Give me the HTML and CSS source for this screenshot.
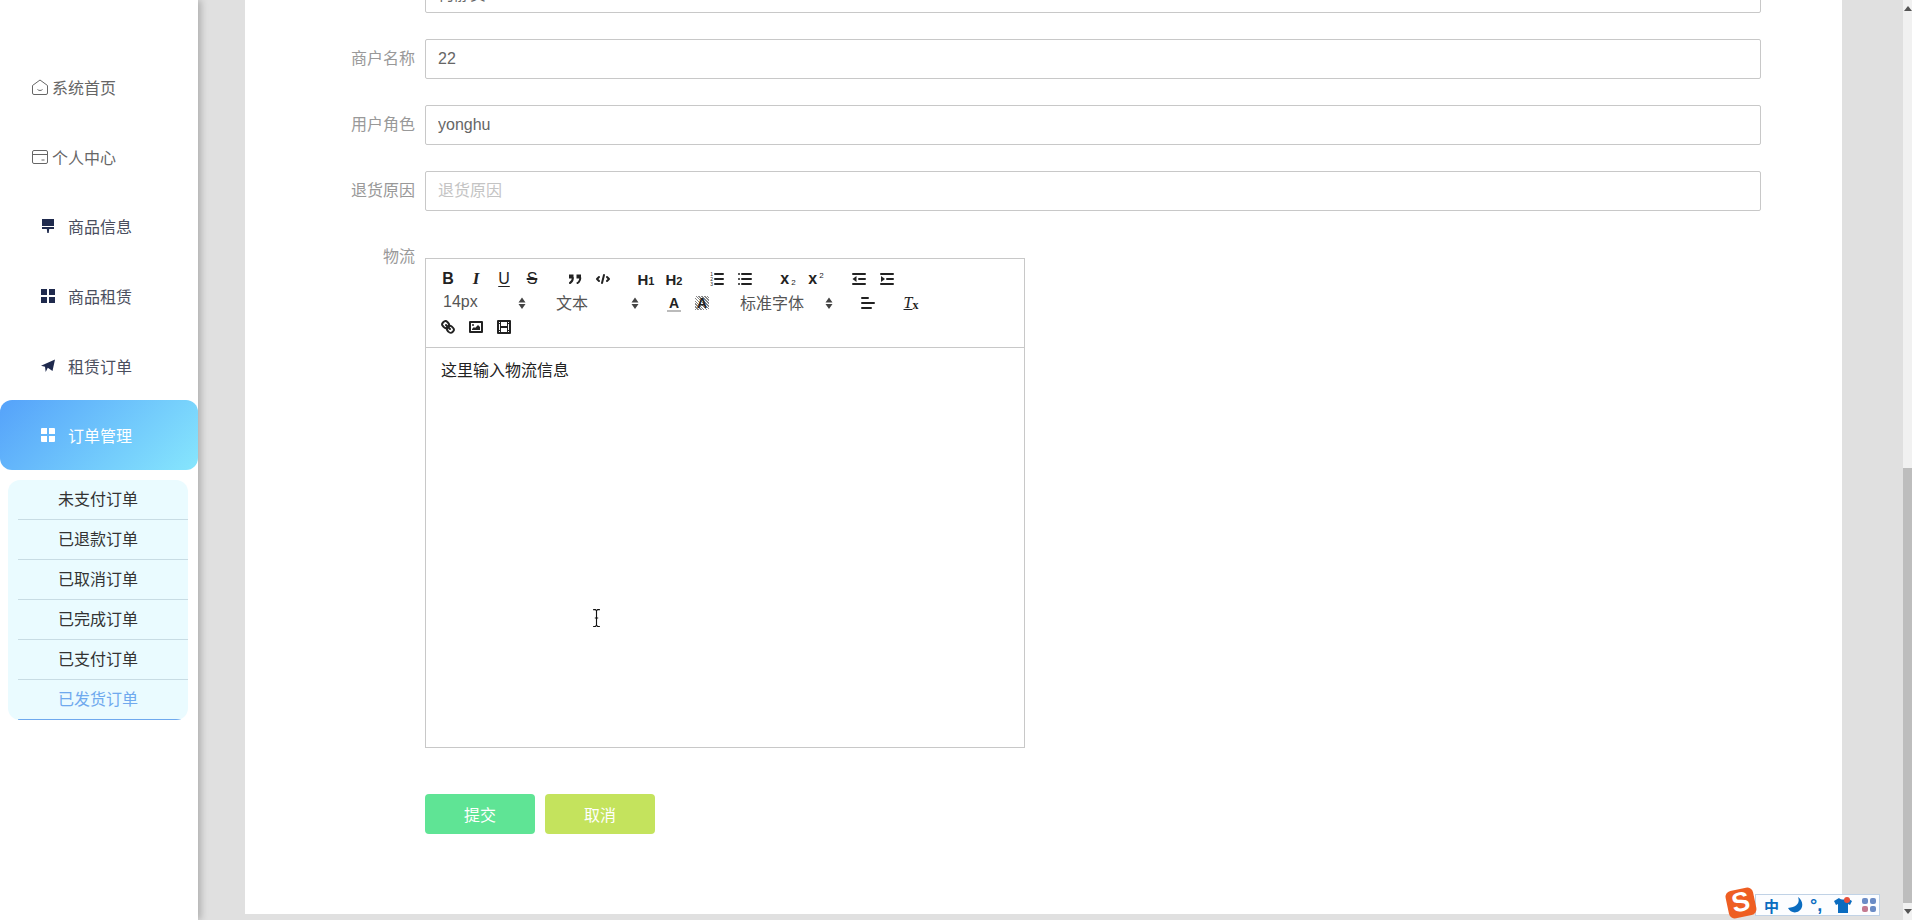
FILE: index.html
```html
<!DOCTYPE html>
<html lang="zh-CN">
<head>
    <meta charset="UTF-8">
    <title>订单管理</title>
    <link rel="stylesheet" href="styles.css">
</head>
<body>
    <aside class="sidebar">
        <a class="nav-item nav-plain">
            <svg class="nav-line-icon" viewBox="0 0 16 16"><path d="M8 1 15.500 6.500V14a1.500 1.500 0 0 1-1.500 1.500H2A1.500 1.500 0 0 1 .5 14V6.500Z"/><path d="M5.500 10.500c1.300 1.300 3.700 1.300 5 0"/></svg>
            <span>系统首页</span>
        </a>
        <a class="nav-item nav-plain">
            <svg class="nav-line-icon" viewBox="0 0 16 16"><rect x=".5" y="1.500" width="15" height="13" rx="1.500"/><path d="M.5 5.500h15M9.500 11h3"/></svg>
            <span>个人中心</span>
        </a>
        <a class="nav-item">
            <svg class="nav-icon" viewBox="0 0 14 14"><path d="M1 0h12v7H1zM1 8h12v2H8.200L7.700 14H6.300L5.800 10H1z"/></svg>
            <span>商品信息</span>
        </a>
        <a class="nav-item">
            <svg class="nav-icon" viewBox="0 0 14 14"><path d="M0 0h6v6H0zM8 0h6v6H8zM0 8h6v6H0zM8 8h6v6H8z"/></svg>
            <span>商品租赁</span>
        </a>
        <a class="nav-item">
            <svg class="nav-icon" viewBox="0 0 14 14"><path d="M14 .5 11.500 12 6.800 8.800 4.700 13 4 7.800 0 6.800Z"/></svg>
            <span>租赁订单</span>
        </a>
        <a class="nav-item nav-active">
            <svg class="nav-icon" viewBox="0 0 14 14"><path d="M0 1a1 1 0 0 1 1-1h5v6H0zM8 0h5a1 1 0 0 1 1 1v5H8zM0 8h6v6H1a1 1 0 0 1-1-1zM8 8h6v5a1 1 0 0 1-1 1H8z"/></svg>
            <span>订单管理</span>
        </a>
        <ul class="submenu">
            <li>未支付订单</li>
            <li>已退款订单</li>
            <li>已取消订单</li>
            <li>已完成订单</li>
            <li>已支付订单</li>
            <li class="sub-current">已发货订单</li>
        </ul>
    </aside>

    <main class="main">
        <form class="card">
            <div class="row">
                <label class="row-label">姓名</label>
                <input class="field" type="text" value="何静贞">
            </div>
            <div class="row">
                <label class="row-label">商户名称</label>
                <input class="field" type="text" value="22">
            </div>
            <div class="row">
                <label class="row-label">用户角色</label>
                <input class="field" type="text" value="yonghu">
            </div>
            <div class="row">
                <label class="row-label">退货原因</label>
                <input class="field" type="text" placeholder="退货原因">
            </div>
            <div class="row">
                <label class="row-label">物流</label>
                <div class="editor">
                    <div class="toolbar">
                        <div class="tool-group">
                            <span class="tool tool-bold">B</span>
                            <span class="tool tool-italic">I</span>
                            <span class="tool tool-under">U</span>
                            <span class="tool tool-strike">S</span>
                        </div>
                        <div class="tool-group">
                            <span class="tool"><svg viewBox="0 0 18 18"><path class="solid" d="M3 4.500h4.500v4H3zM10.500 4.500H15v4h-4.500z"/><path class="line" d="M6.800 8c0 3.500-2.800 5-2.800 5M14.300 8c0 3.500-2.800 5-2.800 5"/></svg></span>
                            <span class="tool"><svg viewBox="0 0 18 18"><path class="line" d="M5 7 3 9l2 2M13 7l2 2-2 2M10 5 8 13"/></svg></span>
                        </div>
                        <div class="tool-group">
                            <span class="tool tool-head">H<small>1</small></span>
                            <span class="tool tool-head">H<small>2</small></span>
                        </div>
                        <div class="tool-group">
                            <span class="tool"><svg viewBox="0 0 18 18"><path class="line" d="M7 4h8M7 9h8M7 14h8"/><text class="mini-num" x="2.200" y="5.500">1</text><text class="mini-num" x="2.200" y="10.500">2</text><text class="mini-num" x="2.200" y="15.500">3</text></svg></span>
                            <span class="tool"><svg viewBox="0 0 18 18"><path class="line" d="M6 4h9M6 9h9M6 14h9M3 4h.01M3 9h.01M3 14h.01"/></svg></span>
                        </div>
                        <div class="tool-group">
                            <span class="tool tool-script">x<sub>2</sub></span>
                            <span class="tool tool-script">x<sup>2</sup></span>
                        </div>
                        <div class="tool-group">
                            <span class="tool"><svg viewBox="0 0 18 18"><path class="line" d="M3 14h12M3 4h12M9 9h6"/><path class="solid" d="M6.500 6v6L2.500 9z"/></svg></span>
                            <span class="tool"><svg viewBox="0 0 18 18"><path class="line" d="M3 14h12M3 4h12M9 9h6"/><path class="solid" d="M3 6v6l4-3z"/></svg></span>
                        </div>
                        <div class="tool-group picker picker-short">
                            <span>14px</span>
                            <svg viewBox="0 0 18 18"><path class="arrow" d="M5.500 8.500 9 3.500l3.500 5zM5.500 10 9 15l3.500-5z"/></svg>
                        </div>
                        <div class="tool-group picker picker-short">
                            <span>文本</span>
                            <svg viewBox="0 0 18 18"><path class="arrow" d="M5.500 8.500 9 3.500l3.500 5zM5.500 10 9 15l3.500-5z"/></svg>
                        </div>
                        <div class="tool-group">
                            <span class="tool tool-color">A</span>
                            <span class="tool tool-back"><b>A</b></span>
                        </div>
                        <div class="tool-group picker picker-long">
                            <span>标准字体</span>
                            <svg viewBox="0 0 18 18"><path class="arrow" d="M5.500 8.500 9 3.500l3.500 5zM5.500 10 9 15l3.500-5z"/></svg>
                        </div>
                        <div class="tool-group">
                            <span class="tool"><svg viewBox="0 0 18 18"><path class="line" d="M3 4h6M3 9h12M3 14h9"/></svg></span>
                        </div>
                        <div class="tool-group">
                            <span class="tool tool-clean"><i>T</i><b>x</b></span>
                        </div>
                        <div class="tool-group">
                            <span class="tool"><svg viewBox="0 0 18 18"><path class="line" d="M7 7l4 4"/><path class="line" d="M8.900 4.600a3.500 3.500 0 0 1 .4 4.700 3.500 3.500 0 0 1-4.700-.4C3.200 7.500 2 6.400 4.200 4.200S7.500 3.200 8.900 4.600Z"/><path class="line" d="M13.400 9.100a3.500 3.500 0 0 0-4.700-.4 3.500 3.500 0 0 0 .4 4.700c1.400 1.400 2.500 2.500 4.700.4s1-3.300-.4-4.700Z"/></svg></span>
                            <span class="tool"><svg viewBox="0 0 18 18"><rect class="line" x="3" y="4" width="12" height="10"/><circle class="solid" cx="6" cy="7" r="1"/><path class="solid" d="M5 12v-1l2-2 1 1 3-3 2 2v3z"/></svg></span>
                            <span class="tool"><svg viewBox="0 0 18 18"><rect class="line" x="3" y="3" width="12" height="12"/><path class="solid" d="M5 3h1v12H5zM12 3h1v12h-1zM5 8h8v2H5zM3 5h3v1H3zM3 12h3v1H3zM12 5h3v1h-3zM12 12h3v1h-3z"/></svg></span>
                        </div>
                    </div>
                    <div class="editor-body">这里输入物流信息</div>
                </div>
            </div>
            <div class="actions">
                <button class="btn btn-submit" type="button">提交</button>
                <button class="btn btn-cancel" type="button">取消</button>
            </div>
        </form>
    </main>

    <div class="scrollbar">
        <span class="scroll-up"></span>
        <div class="scroll-track"></div>
        <div class="scroll-thumb"></div>
        <span class="scroll-down"></span>
    </div>

    <!-- mouse cursor over the editor -->
    <svg class="cursor" viewBox="0 0 8 16"><path d="M1 .5h2l1 1 1-1h2M4 1.500v13M1 15.500h2l1-1 1 1h2M2.500 8h3"/></svg>

    <!-- input method bar -->
    <div class="ime">
        <span class="ime-logo"><b>S</b></span>
        <div class="ime-bar">
            <span class="ime-zh">中</span>
            <svg class="ime-moon" viewBox="0 0 16 16"><path d="M10 0c2 5 0 10-10 11 2 4 7 6 11 3 5-3 4-11-1-14z"/></svg>
            <span class="ime-punc">°,</span>
            <svg class="ime-shirt" viewBox="0 0 18 16"><path d="M5 1 0 4l2 4 2-1v9h10V7l2 1 2-4-5-3c-1 2-6 2-8 0z"/><circle class="ime-dot" cx="13" cy="3" r="3"/></svg>
            <span class="ime-grid"><i></i><i></i><i></i><i></i></span>
        </div>
    </div>
</body>
</html>
```

FILE: styles.css
```css
* {
    box-sizing: border-box;
}
body {
    margin: 0;
    height: 920px;
    display: flex;
    overflow: hidden;
    position: relative;
    background-color: #e0e0e0;
    font-family: "Liberation Sans", "Noto Sans CJK SC", sans-serif;
    font-size: 16px;
}

/* sidebar */
.sidebar {
    width: 198px;
    flex-shrink: 0;
    padding-top: 50px;
    background-color: white;
    box-shadow: 3px 0 7px rgba(0, 0, 0, 0.22);
    position: relative;
}
.nav-item {
    display: flex;
    align-items: center;
    height: 70px;
    padding-left: 41px;
    padding-top: 2px;
    gap: 13px;
    color: #4a4e5e;
}
.nav-plain {
    padding-left: 32px;
    padding-top: 4px;
    gap: 4px;
    color: #666;
}
.nav-line-icon {
    width: 16px;
    height: 16px;
    fill: none;
    stroke: #666;
    stroke-width: 1;
}
.nav-icon {
    width: 14px;
    height: 14px;
    fill: #1f2a4d;
}
.nav-active {
    padding-top: 0;
    color: white;
    border-radius: 12px;
    background: linear-gradient(135deg, #55a2fa, #86e6fd);
}
.nav-active .nav-icon {
    fill: white;
}
.submenu {
    list-style: none;
    width: 180px;
    margin: 10px 0 0 8px;
    padding: 0;
    overflow: hidden;
    border-radius: 12px;
    background-color: #eafbff;
    color: #333;
}
.submenu li {
    height: 40px;
    line-height: 39px;
    margin-left: 10px;
    padding-right: 10px;
    text-align: center;
    border-bottom: 1px solid #c8dce4;
}
.submenu .sub-current {
    color: #6fa9ee;
    border-bottom-color: #6fa9ee;
}

/* form card */
.main {
    width: 1705px;
    padding-left: 47px;
}
.card {
    width: 1597px;
    height: 941px;
    margin-top: -27px;
    background-color: white;
    padding-left: 100px;
}
.row {
    display: flex;
    margin-bottom: 26px;
}
.row-label {
    width: 70px;
    margin-right: 10px;
    line-height: 40px;
    text-align: right;
    color: #999;
    white-space: nowrap;
}
.field {
    width: 1336px;
    height: 40px;
    padding: 0 12px;
    border: 1px solid #c8c8c8;
    border-radius: 2px;
    font: inherit;
    color: #666;
    outline: none;
}
.field::placeholder {
    color: #c4c4c4;
}

/* rich text editor */
.editor {
    width: 600px;
    margin-top: 21px;
    border: 1px solid #c8c8c8;
}
.toolbar {
    display: flex;
    flex-wrap: wrap;
    height: 89px;
    padding: 8px;
    border-bottom: 1px solid #c8c8c8;
    align-content: flex-start;
}
.tool-group {
    display: flex;
    height: 24px;
    margin-right: 15px;
}
.tool {
    display: flex;
    align-items: center;
    justify-content: center;
    width: 28px;
    height: 24px;
    color: #222;
    font-size: 16px;
}
.tool svg {
    width: 18px;
    height: 18px;
}
.line {
    fill: none;
    stroke: #222;
    stroke-width: 2;
    stroke-linecap: round;
    stroke-linejoin: round;
}
.solid {
    fill: #222;
}
.mini-num {
    font-size: 5px;
    fill: #222;
}
.tool-bold {
    font-weight: bold;
    font-size: 16px;
}
.tool-italic {
    font-family: "Liberation Serif", serif;
    font-style: italic;
    font-weight: bold;
    font-size: 17px;
}
.tool-under {
    font-size: 16px;
    text-decoration: underline;
    text-decoration-thickness: 1px;
    text-underline-offset: 2px;
}
.tool-strike {
    font-size: 16px;
    text-decoration: line-through;
    text-decoration-thickness: 2px;
}
.tool-head {
    font-weight: bold;
    font-size: 15px;
}
.tool-head small {
    font-size: 11px;
    margin-top: 3px;
}
.tool-script {
    font-weight: bold;
    font-size: 16px;
    line-height: 1;
}
.tool-script sub,
.tool-script sup {
    font-size: 8px;
    font-weight: normal;
    line-height: 8px;
    margin-left: 2px;
}
.tool-script sub {
    align-self: flex-end;
    margin-bottom: 4px;
}
.tool-script sup {
    align-self: flex-start;
    margin-top: 5px;
}
.picker {
    align-items: center;
    justify-content: space-between;
    padding-left: 9px;
    color: #555;
}
.picker span {
    margin-top: -3px;
}
.picker svg {
    width: 18px;
    height: 18px;
    margin-right: 1px;
}
.picker-short {
    width: 98px;
}
.picker-long {
    width: 108px;
}
.arrow {
    fill: #444;
}
.tool-color {
    font-weight: bold;
    font-size: 14px;
    line-height: 14px;
    height: 17px;
    width: 14px;
    margin: 4px 7px 3px;
    border-bottom: 2px solid #bbb;
}
.tool-back b {
    width: 14px;
    height: 14px;
    line-height: 14px;
    font-size: 14px;
    text-align: center;
    background: repeating-linear-gradient(45deg, #888 0, #888 1px, white 1px, white 2px);
}
.tool-clean {
    font-family: "Liberation Serif", serif;
    font-size: 16px;
}
.tool-clean i {
    text-decoration: underline;
}
.tool-clean b {
    font-size: 12px;
    margin-top: 5px;
}
.editor-body {
    height: 399px;
    padding: 12px 15px;
    line-height: 22px;
    color: #222;
}

/* buttons */
.actions {
    display: flex;
    gap: 10px;
    margin: 46px 0 0 80px;
}
.btn {
    width: 110px;
    height: 40px;
    border: none;
    border-radius: 4px;
    font: inherit;
    color: white;
}
.btn-submit {
    background-color: #5fe495;
}
.btn-cancel {
    background-color: #c4e35d;
}

/* window scrollbar */
.scrollbar {
    width: 9px;
    flex-shrink: 0;
    margin-left: auto;
    display: flex;
    flex-direction: column;
    align-items: center;
    background-color: #f1f1f1;
}
.scroll-up,
.scroll-down {
    width: 0;
    height: 0;
    margin: 6px 0;
    border-left: 4px solid transparent;
    border-right: 4px solid transparent;
}
.scroll-up {
    border-bottom: 5px solid #555;
}
.scroll-down {
    border-top: 5px solid #555;
}
.scroll-track {
    height: 451px;
}
.scroll-thumb {
    width: 100%;
    flex: 1;
    background-color: #bdbdbd;
}

/* things on top of the page */
.cursor {
    position: absolute;
    left: 592px;
    top: 609px;
    width: 9px;
    height: 18px;
    fill: none;
    stroke: #111;
    stroke-width: 1;
}
.ime {
    position: absolute;
    left: 1727px;
    top: 889px;
    display: flex;
    align-items: flex-start;
}
.ime-logo {
    width: 28px;
    height: 28px;
    border-radius: 6px;
    background-color: #ee5e22;
    color: white;
    text-align: center;
    line-height: 27px;
    font-size: 27px;
    transform: rotate(-12deg);
    position: relative;
    z-index: 1;
}
.ime-bar {
    display: flex;
    align-items: center;
    width: 125px;
    height: 22px;
    margin-top: 5px;
    padding-left: 8px;
    background-color: #fcfdff;
    border: 1px solid #c0d2e6;
    color: #0a6cc0;
}
.ime-zh {
    font-weight: bold;
    font-size: 15px;
    margin-right: 9px;
}
.ime-moon {
    width: 16px;
    height: 16px;
    fill: #0a6cc0;
    margin-right: 6px;
}
.ime-punc {
    font-weight: bold;
    font-size: 18px;
    width: 19px;
    margin-right: 5px;
    line-height: 1;
}
.ime-shirt {
    width: 18px;
    height: 16px;
    fill: #0a6cc0;
    margin-right: 10px;
}
.ime-dot {
    fill: #e8503a;
}
.ime-grid {
    display: grid;
    grid-template-columns: 6px 6px;
    gap: 2px;
}
.ime-grid i {
    height: 6px;
    border-radius: 2px;
    background-color: #6b8cc6;
}
.ime-grid i:nth-child(3) {
    background-color: #c47a90;
}
```
